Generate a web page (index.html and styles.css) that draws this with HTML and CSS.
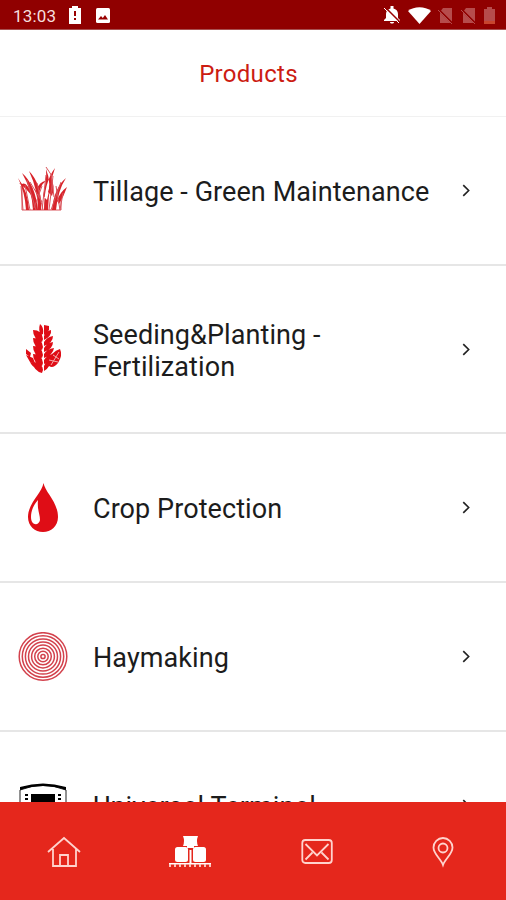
FILE: index.html
```html
<!DOCTYPE html>
<html lang="en">

<head>
    <meta charset="UTF-8">
    <title>Products</title>
    <link rel="stylesheet" href="styles.css">
</head>

<body>
    <div class="app">
        <div class="status">
            <span class="time">13:03</span>
            <svg class="s-alert" width="12" height="18" viewBox="0 0 12 18"><path fill="#fff" d="M0 2h3V0h6v2h3v16H0z"/><path fill="#900" d="M5 5h2v5H5zM5 12h2v2H5z"/></svg>
            <svg class="s-photo" width="14" height="15" viewBox="0 0 14 15"><rect width="14" height="15" rx="1.5" fill="#fff"/><path fill="#900" d="M2 11.5l3-3.5 1.8 2L9 7l3 4.5z"/></svg>
            <div class="status-right">
                <svg width="18" height="18" viewBox="0 0 18 18"><path fill="#fff" d="M1 14l2-2V8c0-3 2-5 4.500-5.500V0h3v2.500C13 3 15 5 15 8v4l2 2v1H1zM7 16h4c0 2-4 2-4 0z"/><path stroke="#900" stroke-width="1.500" d="M2 1l15 15"/><path stroke="#fff" stroke-width="1" d="M1 2l15 15"/></svg>
                <svg width="23" height="17" viewBox="0 0 23 17"><path fill="#fff" d="M0 4C6-1 17-1 23 4L11.500 17z"/></svg>
                <svg class="dim" width="16" height="17" viewBox="0 0 16 17"><path d="M5 1h9v15H2V5z"/><path class="slash" d="M0 2l15 15"/><path class="slash-line" d="M0 3l14 14"/></svg>
                <svg class="dim" width="16" height="17" viewBox="0 0 16 17"><path d="M5 1h9v15H2V5z"/><path class="slash" d="M0 2l15 15"/><path class="slash-line" d="M0 3l14 14"/></svg>
                <svg class="dim" width="11" height="17" viewBox="0 0 11 17"><path d="M0 2h3V0h5v2h3v13H0z"/><path class="low" d="M0 14h11v3H0z"/></svg>
            </div>
        </div>
        <h1 class="title">Products</h1>

        <div class="list">
            <a class="item">
                <svg class="icon" viewBox="0 0 50 50">
                    <path class="grass-base" d="M4 18v26h39V31"/>
                    <g class="grass">
                        <path d="M11 44Q10 25 0 12Q7 26 8 44zM20 44Q17 18 4 7Q14 24 15 44zM23 44Q24 18 11 5Q20 24 20 44z"/>
                        <path d="M26 44Q26 16 37 2Q31 18 30 44zM29 34Q34 17 28 3Q29 14 25 30zM34 44Q36 22 48 12Q40 24 38 44z"/>
                        <path d="M39 35Q42 26 49 21Q46 30 41 38zM4 18Q9 15 14 30Q8 22 1 17zM17 25Q23 14 28 15Q22 19 20 31z"/>
                        <path d="M30 26Q34 14 32 10Q38 20 34 30z"/>
                    </g>
                    <path class="grass-line" d="M5 44L3 20M12 44L7 19M18 44L9 14M25 44L19 17M24 44L28 9M31 44L35 10M33 44L43 16M42 44L45 27M16 42L24 20M36 31L33 8M28 1l6 9M38 20l4 24M12 16l12 20"/>
                </svg>
                <span class="name">Tillage - Green Maintenance</span>
                <svg class="arrow" viewBox="0 0 8 12"><path d="M1 1l5 5-5 5"/></svg>
            </a>
            <a class="item tall">
                <svg class="icon" viewBox="0 0 50 50">
                    <g class="grain">
                        <path d="M22 0q4 3 3 10l-2 1q-3-5-1-11zM15 6q9 0 10 9l-1 3q-9-3-9-12zM15 14q9 0 10 9l-1 3q-9-3-9-12zM15 22q9 0 10 9l-1 3q-9-3-9-12zM15 30q9 0 10 9l-1 3q-9-3-9-12zM14 38q10 0 11 8l-1 3q-8-2-10-11z"/>
                        <path d="M26 1l5 1v4l-5 5zM26 12q2-5 7-6q1 6-7 10zM26 18q3-5 9-6q0 7-9 10zM26 24q3-5 9-6q0 7-9 10zM26 30q3-5 10-6q-1 7-10 10zM26 36q3-5 9-6q0 7-9 10zM26 42q2-5 6-6q1 7-6 11z"/>
                        <path d="M8 25l5 4-1 4-4-3zM8 31l7 3 2 5-5-1zM12 38l4 1 3 5q-5-1-7-6z"/>
                        <path d="M42 25q3 6-2 14q-5 6-9 3q-1-7 3-12q4-4 8-5z"/>
                    </g>
                    <path class="grain-cut" d="M33 41l8-13M31 36l9 2M35 31l6 4"/>
                </svg>
                <span class="name">Seeding&amp;Planting -<br>Fertilization</span>
                <svg class="arrow" viewBox="0 0 8 12"><path d="M1 1l5 5-5 5"/></svg>
            </a>
            <a class="item">
                <svg class="icon" viewBox="0 0 50 50">
                    <path class="drop" d="M25.500 0C27 9 40 19 40 34C40 43 33 49 25 49S10 43 10 34C10 20 24 10 25.500 0z"/>
                    <path class="shine" d="M20 17C15 23 13 28 13 34C13 43 21 43 22 37C22 31 19 27 20 17z"/>
                </svg>
                <span class="name">Crop Protection</span>
                <svg class="arrow" viewBox="0 0 8 12"><path d="M1 1l5 5-5 5"/></svg>
            </a>
            <a class="item">
                <svg class="icon" viewBox="0 0 50 50">
                    <g class="rings">
                        <circle cx="25" cy="24.500" r="23.800"/>
                        <circle cx="25" cy="24.500" r="20.700"/>
                        <circle cx="25" cy="24.500" r="17.600"/>
                        <circle cx="25" cy="24.500" r="14.500"/>
                        <circle cx="25" cy="24.500" r="11.400"/>
                        <circle cx="25" cy="24.500" r="8.300"/>
                        <circle cx="25" cy="24.500" r="5.200"/>
                        <circle cx="25" cy="24.500" r="2.100"/>
                    </g>
                </svg>
                <span class="name">Haymaking</span>
                <svg class="arrow" viewBox="0 0 8 12"><path d="M1 1l5 5-5 5"/></svg>
            </a>
            <a class="item">
                <svg class="icon" viewBox="0 0 50 50">
                    <path class="frame" d="M2 42V9Q25 0 48 9V42z"/>
                    <path d="M2 9V6Q25-1 48 6V9Q25 1 2 9z"/>
                    <path d="M13 13h24v24H13zM7 13h3v2H7zM7 17h3v2H7zM40 13h3v2h-3zM40 17h3v2h-3z"/>
                </svg>
                <span class="name">Universal Terminal</span>
                <svg class="arrow" viewBox="0 0 8 12"><path d="M1 1l5 5-5 5"/></svg>
            </a>
        </div>

        <div class="nav">
            <a>
                <svg width="34" height="32" viewBox="0 0 34 32"><path class="line" d="M1 16L17 2l16 14M6 13v17h23V13M13 30V19h8v11"/></svg>
            </a>
            <a>
                <svg width="42" height="32" viewBox="0 0 42 32">
                    <path class="solid" d="M14 0h15q-2 5 0 10H14q2-5 0-10z"/>
                    <rect class="solid" x="6" y="11" width="13" height="15" rx="2.500"/>
                    <rect class="solid" x="24" y="11" width="13" height="15" rx="2.500"/>
                    <path class="solid" d="M18 10h7v2h-7zM20.500 14h2v13h-2zM0 27h42v1.500H0z"/>
                    <path class="line" d="M1 28v3M6 28v3M11 28v3M16 28v3M21 28v3M26 28v3M31 28v3M36 28v3M41 28v3"/>
                </svg>
            </a>
            <a>
                <svg width="32" height="32" viewBox="0 0 32 32"><rect class="line" x="1.300" y="4" width="29.500" height="23" rx="3"/><path class="line" d="M4.500 8L16 19.500 27.500 8M4.500 23.500l7-7M27.500 23.500l-7-7"/></svg>
            </a>
            <a>
                <svg width="22" height="32" viewBox="0 0 22 32"><path class="line" d="M11 29C9 23 1.500 18 1.500 11.500a9.500 9.500 0 0 1 19 0C20.500 18 13 23 11 29z"/><circle class="line" cx="11" cy="12" r="4.500"/></svg>
            </a>
        </div>
    </div>
</body>

</html>
```
FILE: styles.css
```css
* {
    margin: 0;
    padding: 0;
    box-sizing: border-box;
}

body {
    font-family: Roboto, "Liberation Sans", sans-serif;
    background: #fff;
}

.app {
    display: flex;
    flex-direction: column;
    height: 900px;
    overflow: hidden;
}

.status {
    display: flex;
    flex: none;
    align-items: center;
    height: 30px;
    padding: 1px 11px 0 13px;
    background: #900000;
    border-bottom: 1px solid #a85050;
}

.time {
    width: 56px;
    padding-top: 1px;
    font-size: 17px;
    letter-spacing: .2px;
    color: #f6dede;
}

.s-photo {
    margin-left: 15px;
}

.status-right {
    display: flex;
    align-items: center;
    gap: 7px;
    margin-left: auto;
}

.dim {
    fill: #b64c4c;
}

.dim .slash {
    stroke: #900000;
    stroke-width: 2;
}

.dim .slash-line {
    stroke: #b64c4c;
    stroke-width: 1;
}

.dim .low {
    fill: #c8452e;
}

.title {
    flex: none;
    height: 87px;
    border-bottom: 1px solid #f1f1f1;
    font-size: 24px;
    font-weight: 400;
    line-height: 88px;
    letter-spacing: .3px;
    text-align: center;
    text-indent: -9px;
    color: #cc1c12;
}

.list {
    flex: 1;
    min-height: 0;
    overflow: hidden;
}

.item {
    display: flex;
    align-items: center;
    height: 149px;
    padding: 0 35px 0 18px;
    border-bottom: 2px solid #e6e6e6;
}

.tall {
    height: 168px;
}

.icon {
    flex: none;
    width: 50px;
    height: 50px;
}

.name {
    flex: 1;
    margin-left: 25px;
    padding-top: 3px;
    font-size: 27px;
    line-height: 32px;
    letter-spacing: .08px;
    white-space: nowrap;
    color: #1c1c1c;
}

.arrow {
    width: 9px;
    height: 13px;
    fill: none;
    stroke: #222;
    stroke-width: 1.5;
}

.grass {
    fill: #d8232a;
}

.grass-base,
.grass-line {
    fill: none;
    stroke: #d9545c;
    stroke-width: 1;
}

.grain,
.drop {
    fill: #df0d16;
}

.grain-cut {
    fill: none;
    stroke: #f4aaaa;
    stroke-width: 1;
}

.shine {
    fill: #fff;
}

.rings {
    fill: none;
    stroke: #d3424d;
    stroke-width: 1.5;
}

.frame {
    fill: #fff;
    stroke: #222;
    stroke-width: 1;
}

.nav {
    display: flex;
    flex: none;
    height: 98px;
    padding: 2px 0 0 1px;
    background: #e5271c;
}

.nav a {
    display: flex;
    flex: 1;
    align-items: center;
    justify-content: center;
}

.line {
    fill: none;
    stroke: #ffd3cd;
    stroke-width: 1.8;
}

.solid {
    fill: #fff;
}
```
